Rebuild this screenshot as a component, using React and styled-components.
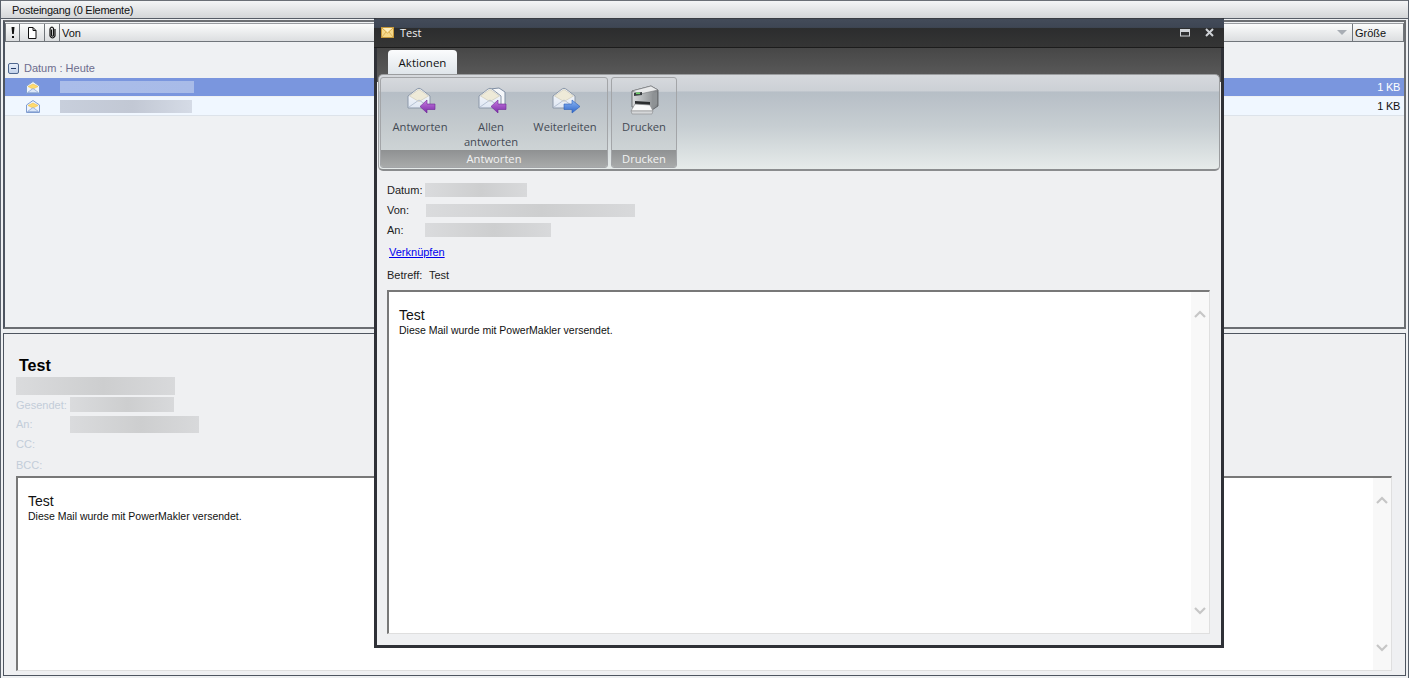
import React from "react";
import styled, { createGlobalStyle } from "styled-components";

const Global = createGlobalStyle`
  html, body { margin: 0; padding: 0; background: #eff0f2; overflow: hidden; }
  * { box-sizing: border-box; }
`;

const Desktop = styled.div`
  position: relative; width: 1409px; height: 678px; overflow: hidden;
  display: flex; flex-direction: column;
  background: #eef0f2;
  border-left: 1px solid #59606a; border-right: 1px solid #59606a;
  font-family: "Liberation Sans", Arial, sans-serif;
`;
const TitleBar = styled.div`
  height: 19px; flex: none; padding-left: 11px; display: flex; align-items: center;
  background: linear-gradient(#f4f5f6, #d4d6d8);
  border-top: 1px solid #6a6f76; border-bottom: 1px solid #565c66;
  font-size: 11px; color: #111; letter-spacing: -0.25px;
`;
const ListPanel = styled.section`
  flex: none; height: 309px; margin: 1px 2px 0 2px; display: flex; flex-direction: column;
  border: 2px solid #6b6e72; border-left-color: #4e5560;
  padding: 1px 0 0 0; background: #eff1f3;
`;
const HeaderRow = styled.div`
  display: flex; height: 19px; flex: none;
  background: linear-gradient(#fbfcfc, #dcdee0);
  border: 1px solid #70757a; border-top-color: #9a9da1;
  font-size: 11px; color: #111;
`;
const HeadCell = styled.div`
  flex: ${(p) => (p.$grow ? "1" : "none")}; width: ${(p) => p.$w ? p.$w + "px" : "auto"};
  display: flex; align-items: center; justify-content: ${(p) => (p.$center ? "center" : "flex-start")};
  padding-left: ${(p) => (p.$center ? 0 : 2)}px;
  border-right: ${(p) => (p.$last ? "none" : "1px solid #70757a")};
`;
const SortMark = styled.svg`margin-left: auto; margin-right: 4px; flex: none;`;
const GroupRow = styled.div`
  margin-top: 17px; height: 18px; flex: none; display: flex; align-items: center; gap: 5px;
  padding-left: 3px; font-size: 11px; color: #6d6d8e;
`;
const Toggle = styled.span`
  width: 11px; height: 11px; flex: none; border: 1px solid #4f678f; border-radius: 2px;
  background: linear-gradient(#e8effa, #c3d2ea); display: flex; align-items: center; justify-content: center;
  &::before { content: ""; width: 5px; height: 1px; background: #243a66; }
`;
const MailRow = styled.div`
  display: flex; align-items: center; height: ${(p) => (p.$selected ? 18 : 19)}px; flex: none;
  margin-top: 1px;
  background: ${(p) => (p.$selected ? "#7a96de" : "#f0f7ff")};
  border-bottom: ${(p) => (p.$selected ? "none" : "1px solid #dde3ea")};
  padding: 0 4px 0 21px;
  color: ${(p) => (p.$selected ? "#fff" : "#111")};
  font-size: 11px; letter-spacing: -0.3px;
`;
const Size = styled.span`margin-left: auto;`;
const Redact = styled.div`
  flex: none; width: ${(p) => p.$w}px; height: ${(p) => p.$h}px;
  margin-left: ${(p) => p.$ml || 0}px;
  background: ${(p) => p.$bg || "linear-gradient(90deg, #dadbdd, #cdcecf 55%, #d8d9db)"};
`;
const PreviewPanel = styled.section`
  flex: 1; margin: 4px 2px 2px 2px; display: flex; flex-direction: column; min-height: 0;
  border: 1px solid #4e5560; background: #eff0f2; padding: 21px 13px 4px 12px;
`;
const MailTitle = styled.div`
  height: 21px; padding-left: 3px; font-size: 16px; font-weight: 700; color: #000; line-height: 21px; margin-bottom: 1px;
`;
const MetaRow = styled.div`
  height: ${(p) => p.$h}px; flex: none; display: flex; align-items: center;
  color: #c3cdd9; font-size: 11px;
`;
const MetaLabel = styled.span`width: 54px; flex: none;`;
const BodyBox = styled.div`
  flex: 1; min-height: 0; display: flex; background: #fff;
  border-top: 2px solid #787878; border-left: 2px solid #787878;
  border-right: 1px solid #dfdfdf; border-bottom: 1px solid #dfdfdf;
`;
const BodyText = styled.div`flex: 1; padding: 15px 10px 0 10px; font-family: "Liberation Sans", Arial, sans-serif;`;
const BodyTitle = styled.div`font-size: 14px; line-height: 16px; color: #111;`;
const BodyLine = styled.div`font-size: 10.5px; line-height: 12px; margin-top: 1px; color: #111;`;
const ScrollTrack = styled.div`
  width: 18px; flex: none; background: #f8f8f8; display: flex; flex-direction: column;
  justify-content: space-between; align-items: center; padding: 18px 0;
`;

const Modal = styled.div`
  position: absolute; left: 373px; top: 18px; width: 850px; height: 630px;
  display: flex; flex-direction: column; background: #eff0f2;
  border: 3px solid #2f3137; border-top: 1px solid #3a3d44;
  font-family: "Open Sans", "Noto Sans", sans-serif;
`;
const ModalTitle = styled.div`
  height: 29px; flex: none; display: flex; align-items: center; padding: 0 6px 1px 7px; gap: 6px;
  background: linear-gradient(#434b59 0, #3e4654 30%, #2c2d2e 34%, #353535 100%);
  border-bottom: 1px solid #1c1c1c; color: #f0f0f0; font-size: 11px; margin: 0 -3px;
`;
const WinBtns = styled.div`margin-left: auto; display: flex; align-items: center; gap: 15px; padding-right: 4px;`;
const TabStrip = styled.div`
  height: 26px; flex: none; padding: 2px 0 0 11px; background: linear-gradient(#474747, #585858);
  display: flex; align-items: flex-end;
`;
const Tab = styled.div`
  width: 69px; height: 24px; display: flex; align-items: center; justify-content: center;
  background: linear-gradient(#fbfcfd, #dfe5ea); border-radius: 4px 4px 0 0;
  font-size: 11.5px; color: #111;
`;
const RibbonWrap = styled.div`background: linear-gradient(#585858 8px, #eff0f2 8px); flex: none;`;
const Ribbon = styled.div`
  margin: 0 1px; height: 97px; display: flex; gap: 3px; padding: 2px 1px 1px;
  border-radius: 5px; border: 1px solid #9b9d9f; border-bottom: 2px solid #8a8c8e;
  background: linear-gradient(#d6d9dd 0, #ccd0d5 17%, #b6bec6 18%, #c7ced2 55%, #e6ebea 100%);
`;
const Group = styled.div`
  width: ${(p) => p.$w}px; display: flex; flex-direction: column; border-radius: 3px; overflow: hidden;
  border: 1px solid #a3a5a8; background: linear-gradient(#d6d9dd 0, #ccd0d5 15%, #b6bec6 16%, #c6cccf 60%, #d4dadb 100%);
`;
const Buttons = styled.div`flex: 1; min-height: 0; display: flex;`;
const RibbonBtn = styled.div`
  width: ${(p) => p.$w}px; flex: none; display: flex; flex-direction: column; align-items: center;
  padding-top: 6px; font-size: 11.2px; line-height: 15px; color: #444a55; text-align: center;
`;
const BtnIcon = styled.div`
  height: 33px; flex: none; display: flex; align-items: center; justify-content: center; margin-bottom: 2px;
  padding-left: ${(p) => p.$shift || 0}px;
`;
const GroupLabel = styled.div`
  height: 17px; flex: none; display: flex; align-items: center; justify-content: center;
  background: linear-gradient(#8f9192, #a8aaaa); color: #f2f2f2; font-size: 11.2px;
`;
const ModalBody = styled.div`
  flex: 1; min-height: 0; display: flex; flex-direction: column; padding: 9px 11px 11px 10px;
  font-family: "Liberation Sans", Arial, sans-serif; font-size: 11px; color: #222;
`;
const Field = styled.div`
  height: 20px; flex: none; display: flex; align-items: center;
`;
const FieldLabel = styled.span`width: ${(p) => p.$w || 38}px; flex: none;`;
const LinkRow = styled.a`
  display: block; height: 24px; line-height: 24px; padding-left: 2px; color: #0000ee; text-decoration: underline;
`;
const SubjectRow = styled.div`
  height: 20px; margin-top: 1px; margin-bottom: 5px; display: flex; align-items: center; flex: none;
`;

const Chevron = ({ down }) => (
  <svg width="12" height="8" viewBox="0 0 12 8">
    <path d={down ? "M1 1 L6 6 L11 1" : "M1 7 L6 2 L11 7"} fill="none" stroke="#c6c6c6" strokeWidth="2.2" />
  </svg>
);

const SmallEnvelope = () => (
  <svg width="14" height="13" viewBox="0 0 14 13">
    <path d="M.5 5 L7 .5 L13.5 5 V12.5 H.5 Z" fill="#eef4fd" stroke="#7f9ccf" />
    <path d="M2 5.5 L7 3 L12 5.5 L7 8 Z" fill="#ffdb6e" stroke="#eebf45" strokeWidth="0.6" />
    <path d="M1.5 11.5 L7 7.5 L12.5 11.5 Z" fill="#dbe7f8" stroke="#8faad8" strokeWidth="0.8" />
  </svg>
);

const TitleEnvelope = () => (
  <svg width="13" height="11" viewBox="0 0 13 11">
    <rect x="0.5" y="0.5" width="12" height="10" fill="#f6d98a" stroke="#c89a3c" />
    <path d="M1 1 L6.5 6 L12 1" fill="#fff0bf" stroke="#d9a944" />
    <path d="M1 10 L5 5 M12 10 L8 5" stroke="#dcb45a" />
  </svg>
);

const arrowColors = {
  purple: ["#c77be0", "#7a2aa8"],
  blue: ["#8bb6f4", "#2f66c9"],
};

const MailIcon = ({ variant, second }) => {
  const [a, b] = arrowColors[variant === "forward" ? "blue" : "purple"];
  const id = `g-${variant}-${second ? 1 : 0}`;
  return (
    <svg width="29" height="27" viewBox="0 0 29 27">
      <defs>
        <linearGradient id={id} x1="0" y1="0" x2="0" y2="1">
          <stop offset="0" stopColor={a} />
          <stop offset="1" stopColor={b} />
        </linearGradient>
        <linearGradient id={`${id}-e`} x1="0" y1="0" x2="0" y2="1">
          <stop offset="0" stopColor="#fbfcfe" />
          <stop offset="1" stopColor="#dfe7f3" />
        </linearGradient>
      </defs>
      {second && <path d="M12 2 L21 1 L27 5 V20 H20 Z" fill="#f5f7fa" stroke="#7f8ea3" strokeWidth="1" />}
      <path d="M1 9 L10 2 Q12 .5 14 2 L23 9 V21 H1 Z" fill={`url(#${id}-e)`} stroke="#8b97a8" strokeWidth="1" />
      <path d="M2.5 9 L11 3 Q12 2.2 13 3 L21.5 9 L12 14.5 Z" fill="#eeead8" stroke="#d0ccba" strokeWidth="0.7" />
      <path d="M2 20 L12 13 L22 20" fill="none" stroke="#b7c3d4" strokeWidth="1" />
      {variant === "forward" ? (
        <path d="M12 17 H20 V13 L28 19.5 L20 26 V22.5 H12 Z" fill={`url(#${id})`} stroke="#2d5fb8" strokeWidth="0.6" />
      ) : (
        <path d="M28 17 H20 V13 L13 19.5 L20 26 V22.5 H28 Z" fill={`url(#${id})`} stroke="#6d2596" strokeWidth="0.6" />
      )}
    </svg>
  );
};

const PrinterIcon = () => (
  <svg width="32" height="31" viewBox="0 0 32 31">
    <defs>
      <linearGradient id="pr" x1="0" y1="0" x2="1" y2="0">
        <stop offset="0" stopColor="#dadcde" />
        <stop offset="1" stopColor="#7e8285" />
      </linearGradient>
    </defs>
    <path d="M4 6 L23 1 L30 5 L30 21 L24 25 L4 22 Z" fill="url(#pr)" stroke="#55585c" strokeWidth="0.8" />
    <path d="M4 6 L23 1 L30 5 L12 9 Z" fill="#e9eaeb" stroke="#77797c" strokeWidth="0.6" />
    <path d="M6 8 L14 7 L14 10 L6 11 Z" fill="#3a3e42" />
    <rect x="8" y="7.5" width="4" height="1.6" fill="#6fd36a" />
    <path d="M7 16 L22 17 V22 L7 20 Z" fill="#2a2c2e" />
    <path d="M24 9 L29 7 V19 L24 23 Z" fill="#8e9295" />
    <path d="M7 19 L22 20 L25 26 L3 26 Z" fill="#fafafa" stroke="#8a8c8f" strokeWidth="0.7" />
    <path d="M3 26 L25 26 L24 29 L4 29 Z" fill="#d5d7d9" stroke="#8a8c8f" strokeWidth="0.6" />
  </svg>
);

const Bang = () => (
  <svg width="6" height="13" viewBox="0 0 6 13">
    <path d="M1.5 1 H4.5 L3.8 8 H2.2 Z" fill="#111" />
    <rect x="2" y="10" width="2" height="2" fill="#111" />
  </svg>
);
const DocIcon = () => (
  <svg width="10" height="12" viewBox="0 0 10 12">
    <path d="M1.5 .5 H6 L9 3.5 V11.5 H1.5 Z M6 .5 V3.5 H9" fill="#fff" stroke="#111" />
  </svg>
);
const ClipIcon = () => (
  <svg width="7" height="13" viewBox="0 0 7 13">
    <path d="M2.5 3.5 V9.5 Q3.5 11 4.5 9.5 V2.5 Q3.5 .5 2 1.5 Q1 2 1 3.5 V10 Q3.5 14 6 10 V3" fill="none" stroke="#111" strokeWidth="1.2" />
  </svg>
);

const MailBody = () => (
  <BodyBox>
    <BodyText>
      <BodyTitle>Test</BodyTitle>
      <BodyLine>Diese Mail wurde mit PowerMakler versendet.</BodyLine>
    </BodyText>
    <ScrollTrack>
      <Chevron />
      <Chevron down />
    </ScrollTrack>
  </BodyBox>
);

export default function App() {
  return (
    <Desktop>
      <Global />
      <TitleBar>Posteingang (0 Elemente)</TitleBar>
      <ListPanel>
        <HeaderRow>
          <HeadCell $w={14} $center><Bang /></HeadCell>
          <HeadCell $w={25} $center><DocIcon /></HeadCell>
          <HeadCell $w={15} $center><ClipIcon /></HeadCell>
          <HeadCell $grow>
            Von
            <SortMark width="12" height="7" viewBox="0 0 12 7"><path d="M1 1 H11 L6 6 Z" fill="#a8adb4" /></SortMark>
          </HeadCell>
          <HeadCell $w={50} $last>Größe</HeadCell>
        </HeaderRow>
        <GroupRow><Toggle />Datum : Heute</GroupRow>
        <MailRow $selected>
          <SmallEnvelope />
          <Redact $w={134} $h={12} $ml={20} $bg="linear-gradient(90deg,#aabde9,#a8bbe8)" />
          <Size>1 KB</Size>
        </MailRow>
        <MailRow>
          <SmallEnvelope />
          <Redact $w={132} $h={13} $ml={20} $bg="linear-gradient(90deg,#c8cfdc,#c2c8d4 55%,#d5dbe6)" />
          <Size>1 KB</Size>
        </MailRow>
      </ListPanel>
      <PreviewPanel>
        <MailTitle>Test</MailTitle>
        <Redact $w={159} $h={18} />
        <MetaRow $h={19}><MetaLabel>Gesendet:</MetaLabel><Redact $w={104} $h={15} /></MetaRow>
        <MetaRow $h={20}><MetaLabel>An:</MetaLabel><Redact $w={129} $h={17} /></MetaRow>
        <MetaRow $h={20}><MetaLabel>CC:</MetaLabel></MetaRow>
        <MetaRow $h={22}><MetaLabel>BCC:</MetaLabel></MetaRow>
        <MailBody />
      </PreviewPanel>
      <Modal>
        <ModalTitle>
          <TitleEnvelope />
          Test
          <WinBtns>
            <svg width="10" height="8" viewBox="0 0 10 8"><rect x=".5" y="1" width="9" height="6" fill="none" stroke="#cfd2d6" /><rect x="0" y="0" width="10" height="3" fill="#cfd2d6" /></svg>
            <svg width="9" height="9" viewBox="0 0 9 9"><path d="M1 1 L8 8 M8 1 L1 8" stroke="#cfd2d6" strokeWidth="2" /></svg>
          </WinBtns>
        </ModalTitle>
        <TabStrip><Tab>Aktionen</Tab></TabStrip>
        <RibbonWrap>
          <Ribbon>
            <Group $w={228}>
              <Buttons>
                <RibbonBtn $w={78}><BtnIcon $shift={3}><MailIcon variant="reply" /></BtnIcon>Antworten</RibbonBtn>
                <RibbonBtn $w={64}><BtnIcon $shift={3}><MailIcon variant="reply" second /></BtnIcon>Allen antworten</RibbonBtn>
                <RibbonBtn $w={84}><BtnIcon $shift={3}><MailIcon variant="forward" /></BtnIcon>Weiterleiten</RibbonBtn>
              </Buttons>
              <GroupLabel>Antworten</GroupLabel>
            </Group>
            <Group $w={66}>
              <Buttons>
                <RibbonBtn $w={64}><BtnIcon><PrinterIcon /></BtnIcon>Drucken</RibbonBtn>
              </Buttons>
              <GroupLabel>Drucken</GroupLabel>
            </Group>
          </Ribbon>
        </RibbonWrap>
        <ModalBody>
          <Field><FieldLabel>Datum:</FieldLabel><Redact $w={102} $h={14} /></Field>
          <Field><FieldLabel>Von:</FieldLabel><Redact $w={209} $h={13} $ml={1} /></Field>
          <Field><FieldLabel>An:</FieldLabel><Redact $w={126} $h={14} /></Field>
          <LinkRow>Verknüpfen</LinkRow>
          <SubjectRow><FieldLabel $w={42}>Betreff:</FieldLabel>Test</SubjectRow>
          <MailBody />
        </ModalBody>
      </Modal>
    </Desktop>
  );
}
